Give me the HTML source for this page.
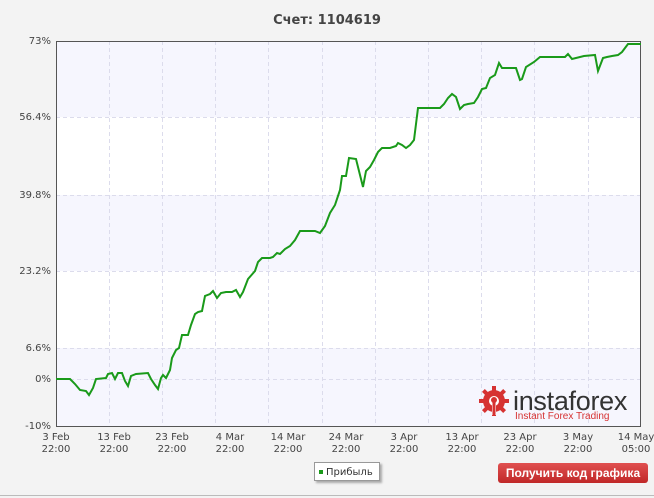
<!DOCTYPE html>
<html><head><meta charset="utf-8"><style>
body{margin:0;width:654px;height:498px;background:#f3f3f3;font-family:"DejaVu Sans","Liberation Sans",sans-serif;overflow:hidden;position:relative}
.t{position:absolute;font-size:10px;color:#444}
</style></head><body>
<div style="position:absolute;left:0;top:13px;width:654px;text-align:center;font:bold 13px 'DejaVu Sans',sans-serif;color:#444">Счет: 1104619</div>
<svg width="654" height="498" style="position:absolute;left:0;top:0">
<rect x="56" y="41" width="585" height="385" fill="#fff"/>
<rect x="56" y="41" width="585" height="76" fill="#f6f6fe"/>
<rect x="56" y="195" width="585" height="76" fill="#f6f6fe"/>
<rect x="56" y="348" width="585" height="78" fill="#f6f6fe"/>
<g stroke="#dcdcec" stroke-dasharray="4,3" stroke-width="1">
<line x1="56" y1="117.5" x2="641" y2="117.5"/><line x1="56" y1="195.5" x2="641" y2="195.5"/><line x1="56" y1="271.5" x2="641" y2="271.5"/><line x1="56" y1="348.5" x2="641" y2="348.5"/><line x1="56" y1="379.5" x2="641" y2="379.5"/>
<line x1="109.5" y1="41" x2="109.5" y2="426"/><line x1="162.5" y1="41" x2="162.5" y2="426"/><line x1="215.5" y1="41" x2="215.5" y2="426"/><line x1="268.5" y1="41" x2="268.5" y2="426"/><line x1="322.5" y1="41" x2="322.5" y2="426"/><line x1="375.5" y1="41" x2="375.5" y2="426"/><line x1="428.5" y1="41" x2="428.5" y2="426"/><line x1="481.5" y1="41" x2="481.5" y2="426"/><line x1="534.5" y1="41" x2="534.5" y2="426"/><line x1="588.5" y1="41" x2="588.5" y2="426"/>
</g>
<rect x="56.5" y="41.5" width="584" height="385" fill="none" stroke="#555"/>
<polyline fill="none" stroke="#1a9a1a" stroke-width="2" points="56,379 70,379 75,384 80,390 86,391 89,395 93,388 96,379 106,378 108,374 112,373 115,379 118,373 122,373 125,381 128,386 131,376 136,374 148,373 151,379 155,385 158,389 161,378 163,375 166,378 170,370 172,358 176,350 179,348 182,335 188,335 191,325 195,314 198,312 202,311 205,296 210,294 213,291 217,298 221,293 226,292 232,292 236,290 240,297 243,292 248,279 255,271 258,262 262,258 270,258 273,257 277,253 280,254 285,249 290,246 295,240 300,231 315,231 320,233 325,226 330,213 335,205 340,190 342,176 346,176 349,158 356,159 360,175 363,187 366,171 370,167 374,160 378,152 382,148 390,148 396,146 398,143 402,145 406,148 410,145 414,140 418,108 440,108 444,104 448,98 452,94 456,97 460,109 464,105 468,104 474,103 478,97 482,89 486,88 490,78 495,75 499,63 502,68 516,68 520,80 522,79 526,67 534,62 540,57 565,57 568,54 572,59 584,56 595,55 598,71 603,58 607,57 612,56 618,55 622,52 628,44 641,44"/>
<g transform="translate(494,401)" fill="#d63232">
<circle r="11"/><g stroke="#d63232" stroke-width="4">
<line x1="0" y1="-15" x2="0" y2="15"/><line x1="-15" y1="0" x2="15" y2="0"/><line x1="-10.6" y1="-10.6" x2="10.6" y2="10.6"/><line x1="-10.6" y1="10.6" x2="10.6" y2="-10.6"/></g>
<circle r="5" fill="#fff"/><rect x="-2" y="-2" width="4" height="16" fill="#fff"/><circle r="3" cy="-1" fill="#d63232"/><rect x="-1.5" y="0" width="3" height="14" fill="#d63232"/>
</g>
<text x="513" y="410" font-family="Liberation Sans,sans-serif" font-size="27" fill="#333" letter-spacing="-0.3">instaforex</text>
<text x="515" y="419" font-family="Liberation Sans,sans-serif" font-size="10" fill="#d63232">Instant Forex Trading</text>
</svg>
<div class="t" style="right:603px;top:36px">73%</div>
<div class="t" style="right:603px;top:112px">56.4%</div>
<div class="t" style="right:603px;top:190px">39.8%</div>
<div class="t" style="right:603px;top:266px">23.2%</div>
<div class="t" style="right:603px;top:343px">6.6%</div>
<div class="t" style="right:603px;top:374px">0%</div>
<div class="t" style="right:603px;top:421px">-10%</div>
<div class="t" style="left:26px;top:432px;width:60px;text-align:center;line-height:12px">3 Feb<br>22:00</div>
<div class="t" style="left:84px;top:432px;width:60px;text-align:center;line-height:12px">13 Feb<br>22:00</div>
<div class="t" style="left:142px;top:432px;width:60px;text-align:center;line-height:12px">23 Feb<br>22:00</div>
<div class="t" style="left:200px;top:432px;width:60px;text-align:center;line-height:12px">4 Mar<br>22:00</div>
<div class="t" style="left:258px;top:432px;width:60px;text-align:center;line-height:12px">14 Mar<br>22:00</div>
<div class="t" style="left:316px;top:432px;width:60px;text-align:center;line-height:12px">24 Mar<br>22:00</div>
<div class="t" style="left:374px;top:432px;width:60px;text-align:center;line-height:12px">3 Apr<br>22:00</div>
<div class="t" style="left:432px;top:432px;width:60px;text-align:center;line-height:12px">13 Apr<br>22:00</div>
<div class="t" style="left:490px;top:432px;width:60px;text-align:center;line-height:12px">23 Apr<br>22:00</div>
<div class="t" style="left:548px;top:432px;width:60px;text-align:center;line-height:12px">3 May<br>22:00</div>
<div class="t" style="left:606px;top:432px;width:60px;text-align:center;line-height:12px">14 May<br>05:00</div>
<div style="position:absolute;left:314px;top:462px;width:66px;height:19px;background:#fff;border:1px solid #999;box-shadow:2px 2px 2px #aaa;font-size:10px;color:#333;line-height:19px;box-sizing:border-box;padding-left:4px"><span style="display:inline-block;width:4px;height:4px;background:#1a9a1a;vertical-align:middle;margin-right:3px"></span>Прибыль</div>
<div style="position:absolute;left:498px;top:463px;width:150px;height:20px;background:linear-gradient(#e05050,#c02828);border-radius:3px;color:#fff;font:bold 12px 'Liberation Sans',sans-serif;text-align:center;line-height:20px">Получить код графика</div>
<div style="position:absolute;left:0;top:495px;width:654px;height:1px;background:#bbb"></div>
</body></html>
